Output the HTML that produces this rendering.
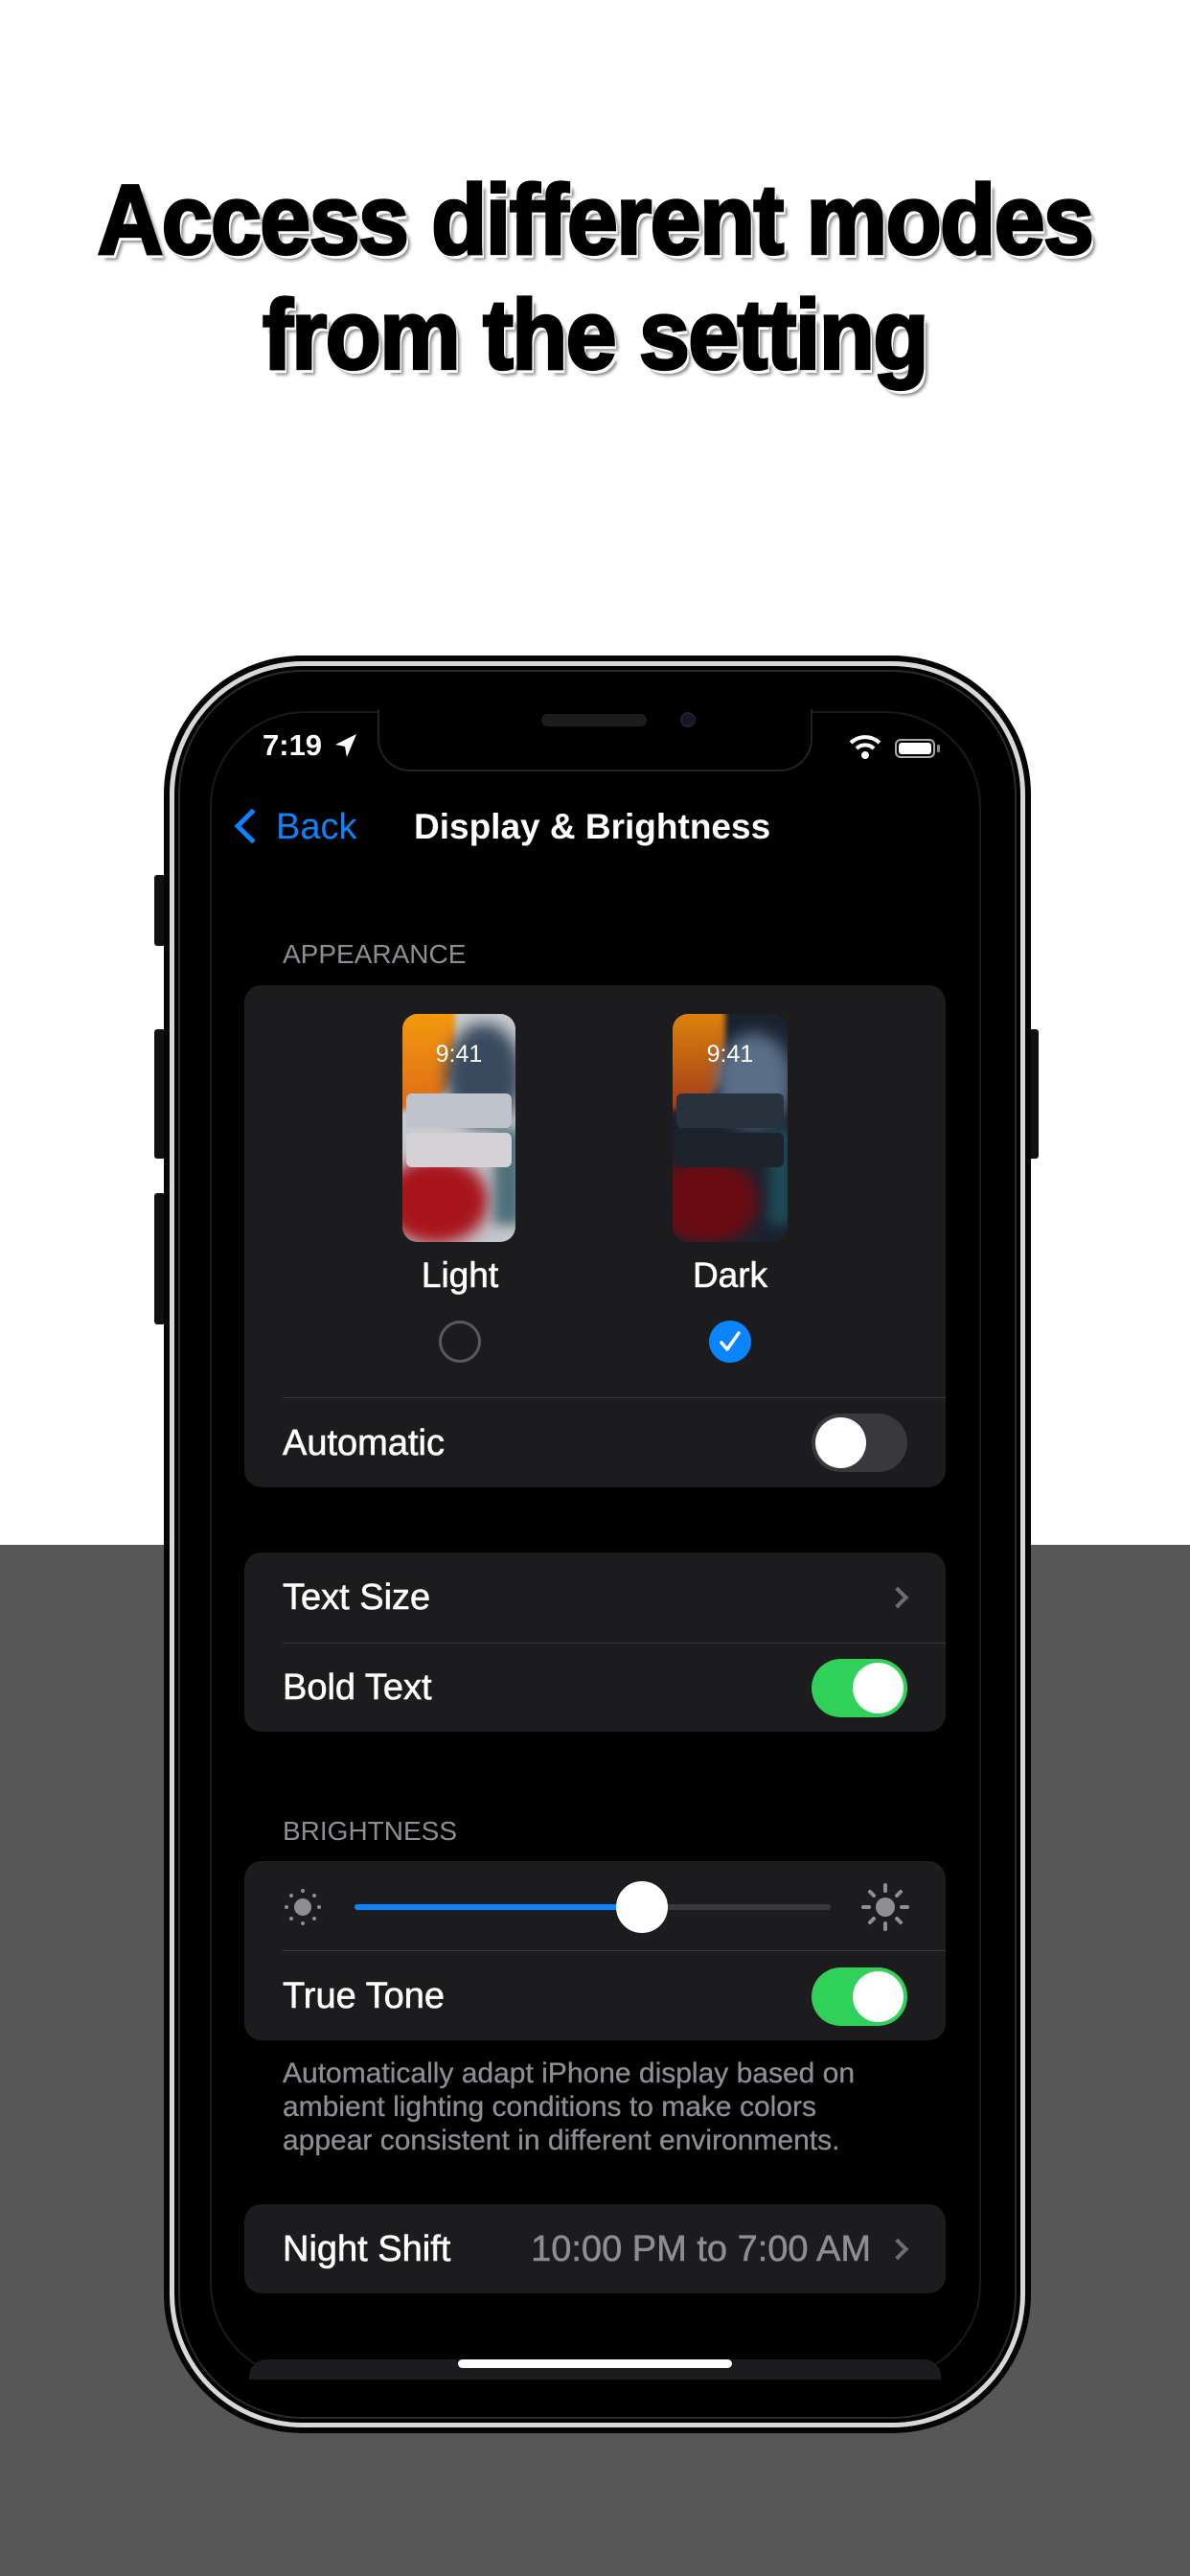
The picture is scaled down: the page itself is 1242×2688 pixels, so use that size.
<!DOCTYPE html>
<html><head><meta charset="utf-8"><style>
*{margin:0;padding:0;box-sizing:border-box}
body{width:1242px;height:2688px;position:relative;overflow:hidden;background:#fff;font-family:"Liberation Sans",sans-serif}
.a{position:absolute}
.title{left:0;width:1242px;text-align:center;font-weight:bold;font-size:95px;color:#000;-webkit-text-stroke:3px #000;letter-spacing:-1.5px;text-shadow:3px 4px 0 #fff,5px 6px 3px #888;transform:scaleY(1.08)}
.card{position:absolute;left:255px;width:732px;background:#1c1c1e;border-radius:18px}
.lbl{position:absolute;color:#fff;font-size:38px;left:40px;-webkit-text-stroke:0.6px #fff}
.hdr{position:absolute;left:295px;color:#8d8d93;font-size:28px}
.sep{position:absolute;left:40px;right:0;height:1px;background:#38383a}
.tog{position:absolute;width:100px;height:61px;border-radius:31px;right:40px}
.tog .k{position:absolute;top:4px;width:53px;height:53px;border-radius:50%;background:#fff}
.chev{position:absolute;right:42px;width:16px;height:16px;border-right:4px solid #6d6d72;border-top:4px solid #6d6d72;transform:rotate(45deg)}
</style></head><body>
<div class="a" style="left:0;top:1612px;width:1242px;height:1076px;background:#575757"></div>
<div class="a title" style="top:176px">Access different modes</div>
<div class="a title" style="top:296px">from the setting</div>

<div class="a" style="left:161px;top:913px;width:12px;height:74px;background:#111;border-radius:3px"></div>
<div class="a" style="left:161px;top:1074px;width:12px;height:135px;background:#111;border-radius:3px"></div>
<div class="a" style="left:161px;top:1245px;width:12px;height:137px;background:#111;border-radius:3px"></div>
<div class="a" style="left:1072px;top:1074px;width:12px;height:135px;background:#111;border-radius:3px"></div>

<div class="a" style="left:171px;top:684px;width:905px;height:1855px;background:#050505;border-radius:145px"></div>
<div class="a" style="left:177px;top:690px;width:893px;height:1843px;border:5px solid #d8d8d8;border-radius:139px;background:#000"></div>
<div class="a" style="left:186px;top:699px;width:875px;height:1825px;border:2px solid #2a2a2a;border-radius:130px"></div>
<div class="a" style="left:219px;top:742px;width:805px;height:1741px;background:#000;border-radius:100px;overflow:hidden;border:2px solid #1a1a1a"></div>

<div class="a" style="left:394px;top:740px;width:454px;height:65px;background:#000;border:2px solid #222;border-top:none;border-radius:0 0 34px 34px"></div>
<div class="a" style="left:565px;top:745px;width:110px;height:13px;background:#1c1c1c;border-radius:7px"></div>
<div class="a" style="left:710px;top:743px;width:16px;height:16px;background:#14182e;border-radius:50%;border:2px solid #222"></div>

<div class="a" style="left:274px;top:760px;color:#fff;font-weight:bold;font-size:31px">7:19</div>
<svg class="a" style="left:348px;top:764px" width="26" height="28" viewBox="0 0 26 28"><path d="M24 2 L2 13 L12 15 L14 26 Z" fill="#fff"/></svg>
<svg class="a" style="left:886px;top:765px" width="34" height="28" viewBox="0 0 34 28"><path d="M2 10 A22 22 0 0 1 32 10" stroke="#fff" stroke-width="4" fill="none"/><path d="M8 16 A13 13 0 0 1 26 16" stroke="#fff" stroke-width="4" fill="none"/><circle cx="17" cy="23" r="4" fill="#fff"/></svg>
<div class="a" style="left:934px;top:771px;width:42px;height:20px;border:2px solid #aaa;border-radius:6px;padding:2px"><div style="width:100%;height:100%;background:#fff;border-radius:3px"></div></div>
<div class="a" style="left:978px;top:777px;width:3px;height:8px;background:#888;border-radius:1px"></div>

<div class="a" style="left:250px;top:849px;width:26px;height:26px;border-left:5px solid #0a84ff;border-bottom:5px solid #0a84ff;transform:rotate(45deg)"></div>
<div class="a" style="left:288px;top:842px;color:#0a84ff;font-size:38px">Back</div>
<div class="a" style="left:432px;top:842px;color:#fff;font-size:37px;font-weight:bold">Display &amp; Brightness</div>

<div class="hdr" style="top:980px">APPEARANCE</div>
<div class="card" style="top:1028px;height:524px">
  <div class="a" style="left:165px;top:30px;width:118px;height:238px;border-radius:16px;overflow:hidden;background:linear-gradient(#c9ccd1,#c4c6ca)">
    <div class="a" style="left:-20px;top:-20px;width:75px;height:120px;border-radius:0 0 50px 10px;background:linear-gradient(#f5a30a,#e06a1a);filter:blur(3px)"></div>
    <div class="a" style="left:45px;top:10px;width:80px;height:110px;border-radius:50%;background:#3a4a5e;filter:blur(8px)"></div>
    <div class="a" style="left:-20px;top:150px;width:110px;height:90px;border-radius:50%;background:#a8141c;filter:blur(8px)"></div>
    <div class="a" style="left:95px;top:120px;width:30px;height:100px;background:#4e6f7a;filter:blur(6px)"></div>
    <div class="a" style="left:4px;top:83px;width:110px;height:36px;border-radius:6px;background:#bfc4cc"></div>
    <div class="a" style="left:4px;top:124px;width:110px;height:36px;border-radius:6px;background:#d4d2d6"></div>
    <div class="a" style="left:0;top:28px;width:118px;text-align:center;color:#fff;font-size:25px">9:41</div>
  </div>
  <div class="a" style="left:447px;top:30px;width:120px;height:238px;border-radius:16px;overflow:hidden;background:#1a2230">
    <div class="a" style="left:-20px;top:-20px;width:75px;height:120px;border-radius:0 0 50px 10px;background:linear-gradient(#e8900a,#a33a1a);filter:blur(3px)"></div>
    <div class="a" style="left:45px;top:20px;width:80px;height:100px;border-radius:50%;background:#5a6e88;filter:blur(8px)"></div>
    <div class="a" style="left:-20px;top:150px;width:110px;height:90px;border-radius:50%;background:#6a0c12;filter:blur(8px)"></div>
    <div class="a" style="left:100px;top:120px;width:25px;height:100px;background:#1e4a55;filter:blur(6px)"></div>
    <div class="a" style="left:4px;top:83px;width:112px;height:36px;border-radius:6px;background:#27323c"></div>
    <div class="a" style="left:4px;top:124px;width:112px;height:36px;border-radius:6px;background:#1c222a"></div>
    <div class="a" style="left:0;top:28px;width:120px;text-align:center;color:#fff;font-size:25px">9:41</div>
  </div>
  <div class="a" style="left:125px;top:282px;width:200px;text-align:center;color:#fff;font-size:37px;-webkit-text-stroke:0.6px #fff">Light</div>
  <div class="a" style="left:407px;top:282px;width:200px;text-align:center;color:#fff;font-size:37px;-webkit-text-stroke:0.6px #fff">Dark</div>
  <div class="a" style="left:203px;top:350px;width:44px;height:44px;border-radius:50%;border:3px solid #5a5a5e"></div>
  <div class="a" style="left:485px;top:350px;width:44px;height:44px;border-radius:50%;background:#0a84ff"></div>
  <svg class="a" style="left:485px;top:350px" width="44" height="44" viewBox="0 0 44 44"><path d="M13 23 L19 30 L31 13" stroke="#fff" stroke-width="3.5" fill="none" stroke-linecap="round" stroke-linejoin="round"/></svg>
  <div class="sep" style="top:430px"></div>
  <div class="lbl" style="top:457px">Automatic</div>
  <div class="tog" style="top:447px;background:#39393d"><div class="k" style="left:4px"></div></div>
</div>

<div class="card" style="top:1620px;height:187px">
  <div class="lbl" style="top:26px">Text Size</div>
  <div class="chev" style="top:39px"></div>
  <div class="sep" style="top:94px"></div>
  <div class="lbl" style="top:120px">Bold Text</div>
  <div class="tog" style="top:111px;background:#30d158"><div class="k" style="right:4px"></div></div>
</div>

<div class="hdr" style="top:1895px">BRIGHTNESS</div>
<div class="card" style="top:1942px;height:187px">
  <svg class="a" style="left:40px;top:27px" width="42" height="42" viewBox="0 0 42 42"><circle cx="21" cy="21" r="9" fill="#8e8e93"/><g fill="#8e8e93"><circle cx="21" cy="4" r="2"/><circle cx="21" cy="38" r="2"/><circle cx="4" cy="21" r="2"/><circle cx="38" cy="21" r="2"/><circle cx="9" cy="9" r="2"/><circle cx="33" cy="9" r="2"/><circle cx="9" cy="33" r="2"/><circle cx="33" cy="33" r="2"/></g></svg>
  <div class="a" style="left:115px;top:45px;width:497px;height:6px;background:#3a3a3c;border-radius:3px"></div>
  <div class="a" style="left:115px;top:45px;width:300px;height:6px;background:#0a84ff;border-radius:3px"></div>
  <div class="a" style="left:388px;top:21px;width:54px;height:54px;border-radius:50%;background:#fff"></div>
  <svg class="a" style="left:643px;top:22px" width="52" height="52" viewBox="0 0 52 52"><circle cx="26" cy="26" r="10" fill="#8e8e93"/><g stroke="#8e8e93" stroke-width="4" stroke-linecap="round"><path d="M26 3v6M26 43v6M3 26h6M43 26h6M10 10l4 4M38 38l4 4M42 10l-4 4M14 38l-4 4"/></g></svg>
  <div class="sep" style="top:93px"></div>
  <div class="lbl" style="top:120px">True Tone</div>
  <div class="tog" style="top:111px;background:#30d158"><div class="k" style="right:4px"></div></div>
</div>
<div class="a" style="left:295px;top:2146px;color:#8d8d93;font-size:30px;line-height:35px;-webkit-text-stroke:0.3px #8d8d93">Automatically adapt iPhone display based on<br>ambient lighting conditions to make colors<br>appear consistent in different environments.</div>

<div class="card" style="top:2300px;height:93px">
  <div class="lbl" style="top:26px">Night Shift</div>
  <div class="a" style="right:78px;top:26px;color:#8d8d93;font-size:38px;-webkit-text-stroke:0.5px #8d8d93">10:00 PM to 7:00 AM</div>
  <div class="chev" style="top:39px"></div>
</div>
<div class="card" style="top:2462px;height:21px;border-radius:18px 18px 0 0;left:260px;width:722px"></div>
<div class="a" style="left:478px;top:2462px;width:286px;height:9px;background:#fff;border-radius:5px"></div>
</body></html>
